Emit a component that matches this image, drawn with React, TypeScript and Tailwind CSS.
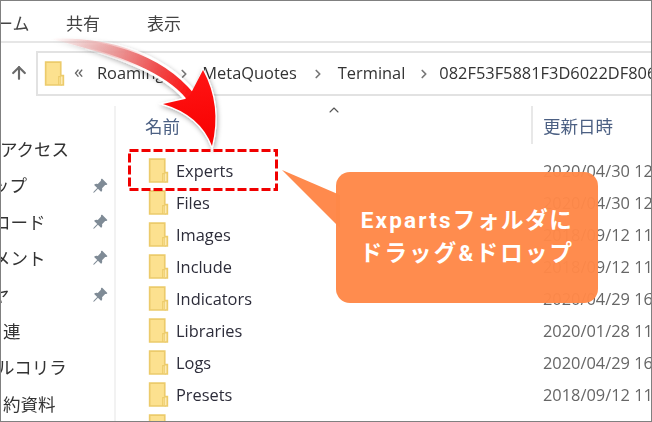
import { ArrowUp, ChevronRight, ChevronUp } from "lucide-react";
import { BsPinAngleFill } from "react-icons/bs";

const font = { fontFamily: '"Open Sans","Noto Sans CJK JP",sans-serif' };

function Folder({ className }: { className: string }) {
  return (
    <svg viewBox="0 0 19 24" className={className}>
      <path d="M1 1H15.5V23H1Z" fill="#fce18f" stroke="#eccb6b" strokeWidth="1.6" />
      <path d="M15.5 14H18V23H15.5" fill="#fdeab2" stroke="#eccb6b" strokeWidth="1.6" />
      <path d="M13.5 23V15H15.5" fill="none" stroke="#eccb6b" strokeWidth="1" />
    </svg>
  );
}

const side = [
  { t: "アクセス", pin: false, ml: "-ml-[1px]" },
  { t: "ップ", pin: true, ml: "-ml-[9px]" },
  { t: "ロード", pin: true, ml: "-ml-[8px]" },
  { t: "メント", pin: true, ml: "-ml-[8px]" },
  { t: "ヤ", pin: true, ml: "-ml-[9px]" },
  { t: "連", pin: false, ml: "ml-[2px]" },
  { t: "ルコリラ", pin: false, ml: "-ml-[4px]" },
  { t: "約資料", pin: false, ml: "ml-[2px]" },
];

const rows = [
  ["Experts", "2020/04/30 12"],
  ["Files", "2020/04/30 12"],
  ["Images", "2018/09/12 11"],
  ["Include", "2018/09/12 11"],
  ["Indicators", "2020/04/29 16"],
  ["Libraries", "2020/01/28 11"],
  ["Logs", "2020/04/29 16"],
  ["Presets", "2018/09/12 11"],
  ["Profiles", "2020/04/29 16"],
];

export default function App() {
  return (
    <div style={font} className="relative w-[652px] h-[422px] bg-white border border-[#808080] overflow-hidden flex flex-col text-[#333]">
      <div className="blur-[0.3px] flex-1 min-h-0 flex flex-col">
        <div className="h-[42px] shrink-0 flex items-center border-b-2 border-[#e6e6e6] text-[17px] text-[#444] pt-[6px]">
          <span className="-ml-[5px] w-[70px] whitespace-nowrap">ーム</span>
          <span className="w-[81px]">共有</span>
          <span>表示</span>
        </div>
        <div className="h-[63px] shrink-0 flex items-start pt-[8px]">
          <div className="w-[35px] h-[44px] flex items-center justify-center shrink-0">
            <ArrowUp size={20} strokeWidth={2.6} className="text-[#6a6a6a] ml-[1px]" />
          </div>
          <div className="flex-1 min-w-0 h-[45px] border-2 border-r-0 border-[#e2e2e2] flex items-center pl-[6px] whitespace-nowrap overflow-hidden text-[16.4px] text-[#333]">
            <Folder className="w-[21px] h-[25px] shrink-0" />
            <span className="ml-[9px] w-[23px] shrink-0 text-[#666] text-[19px] leading-none -mt-[4px]">«</span>
            <span className="shrink-0">Roaming</span>
            <ChevronRight size={14} strokeWidth={3} className="shrink-0 text-[#777] ml-[13px] mr-[11px]" />
            <span className="shrink-0">MetaQuotes</span>
            <ChevronRight size={14} strokeWidth={3} className="shrink-0 text-[#777] ml-[14px] mr-[13px]" />
            <span className="shrink-0">Terminal</span>
            <ChevronRight size={14} strokeWidth={3} className="shrink-0 text-[#777] ml-[12px] mr-[8px]" />
            <span className="shrink-0">082F53F5881F3D6022DF806</span>
          </div>
        </div>
        <div className="flex-1 flex min-h-0">
          <div className="w-[115px] shrink-0 border-r-2 border-[#f2f2f2] pt-[25px] text-[17.5px] text-[#333]">
            {side.map((s) => (
              <div key={s.t} className="h-[36.4px] flex items-center justify-between pr-[6px] overflow-hidden">
                <span className={`${s.ml} whitespace-nowrap`}>{s.t}</span>
                {s.pin && <BsPinAngleFill size={16} className="text-[#7f8b96]" />}
              </div>
            ))}
          </div>
          <div className="flex-1 min-w-0 flex flex-col">
            <div className="h-[38px] shrink-0 flex text-[17.5px] text-[#4c6083]">
              <div className="w-[415px] pl-[29px] pt-[7px] relative">
                名前
                <ChevronUp size={16} strokeWidth={1.6} className="absolute left-[210px] top-[-4px] text-[#555]" />
              </div>
              <div className="border-l-2 border-[#e8e8e8] pl-[10px] pt-[7px] whitespace-nowrap">更新日時</div>
            </div>
            <div className="pt-[10px] text-[16.4px]">
              {rows.map(([n, d]) => (
                <div key={n} className="h-[32px] flex items-center">
                  <div className="w-[417px] shrink-0 pl-[32px] flex items-center text-[#2d2d3a]">
                    <Folder className="w-[21px] h-[25px] shrink-0" />
                    <span className="ml-[7px] relative top-[1px]">{n}</span>
                  </div>
                  <span className="ml-[10px] shrink-0 whitespace-nowrap text-[#666] relative top-[1px]">{d}</span>
                </div>
              ))}
            </div>
          </div>
        </div>
      </div>

      <svg className="absolute left-[-1px] top-[-1px] w-[652px] h-[422px]" viewBox="0 0 652 422">
        <defs>
          <linearGradient id="g" x1="50" y1="40" x2="190" y2="100" gradientUnits="userSpaceOnUse">
            <stop offset="0" stopColor="#f4b0b0" stopOpacity="0" />
            <stop offset="0.4" stopColor="#ec9a9a" stopOpacity="0.9" />
            <stop offset="0.75" stopColor="#f04545" />
            <stop offset="1" stopColor="#ff0f0f" />
          </linearGradient>
          <linearGradient id="w" x1="90" y1="40" x2="190" y2="100" gradientUnits="userSpaceOnUse">
            <stop offset="0" stopColor="#fff" stopOpacity="0" />
            <stop offset="0.5" stopColor="#fff" />
          </linearGradient>
          <filter id="s" x="-20%" y="-20%" width="140%" height="140%">
            <feDropShadow dx="1" dy="2" stdDeviation="2.5" floodColor="#000" floodOpacity="0.35" />
          </filter>
          <linearGradient id="h" x1="195" y1="70" x2="205" y2="146" gradientUnits="userSpaceOnUse">
            <stop offset="0" stopColor="#ff1515" />
            <stop offset="1" stopColor="#f80000" />
          </linearGradient>
        </defs>
        <path
          d="M50 39C100 36 160 50 195 93L203 70Q222 105 212 146Q200 115 163 104L185 99C165 75 120 55 50 39Z"
          fill="url(#g)"
          stroke="url(#w)"
          strokeWidth="2.5"
          filter="url(#s)"
        />
        <path d="M190 95L203 70Q222 105 212 146Q200 115 163 104L185 99Z" fill="url(#h)" />
        <path d="M282 170L340 195V228Z" fill="#ff8a4d" />
        <rect x="129.5" y="150.5" width="147" height="39" fill="none" stroke="#f00000" strokeWidth="3" strokeDasharray="9 3" />
      </svg>

      <div className="absolute left-[335px] top-[171px] w-[262px] h-[131px] rounded-[14px] bg-[#ff8848]/97 flex flex-col items-center justify-center text-white font-bold text-[22.5px] leading-[33px] tracking-[2.2px] pb-[2px] whitespace-nowrap" style={{ fontFamily: 'Roboto,"Noto Sans CJK JP",sans-serif' }}>
        <div>Exparts<span className="tracking-[1.6px]">フォルダに</span></div>
        <div>ドラッグ&amp;ドロップ</div>
      </div>
    </div>
  );
}
